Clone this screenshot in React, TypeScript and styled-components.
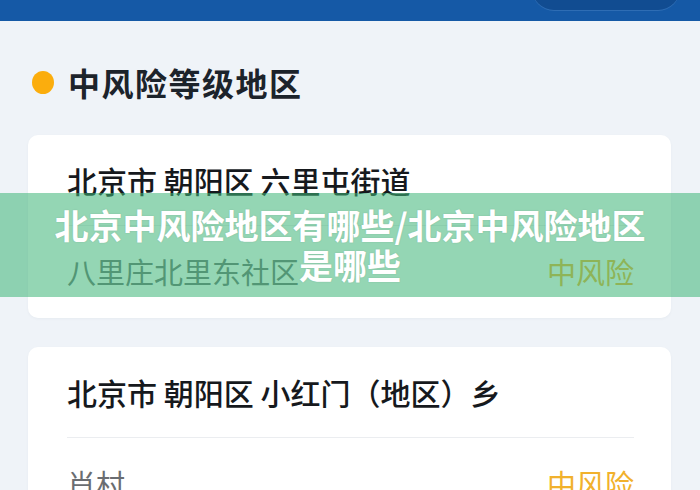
import React from "react";
import styled, { createGlobalStyle } from "styled-components";

const Global = createGlobalStyle`
  html, body { margin: 0; padding: 0; }
  body {
    width: 700px;
    height: 490px;
    overflow: hidden;
    background: #eff3f8;
    font-family: "Noto Sans CJK SC", "Noto Sans", sans-serif;
  }
`;

const Page = styled.div`
  position: relative;
  width: 700px;
  height: 490px;
  overflow: hidden;
  background: #eff3f8;
`;

const TopBar = styled.div`
  height: 21px;
  background: #1559a6;
  display: flex;
  justify-content: flex-end;
  align-items: flex-end;
  padding: 0 20px 11px 0;
  box-sizing: border-box;
  overflow: hidden;
`;

const Pill = styled.div`
  width: 148px;
  height: 40px;
  flex: none;
  border-radius: 0 0 22px 22px;
  background: #114c91;
  box-shadow: 0 1px 0 #2e6db4;
`;

const Section = styled.div`
  display: flex;
  flex-direction: column;
  padding: 0 29px 0 28px;
`;

const Heading = styled.div`
  display: flex;
  align-items: center;
  gap: 14px;
  height: 40px;
  margin: 41px 0 0 4px;
`;

const Dot = styled.span`
  width: 22px;
  height: 23px;
  border-radius: 50%;
  background: #fbad0d;
  flex: none;
`;

const HeadingText = styled.span`
  font-size: 32px;
  font-weight: 700;
  color: #1c232b;
  line-height: 40px;
  letter-spacing: 1.5px;
`;

const CardList = styled.div`
  display: flex;
  flex-direction: column;
  gap: 29px;
  margin-top: 33px;
`;

const Card = styled.div`
  background: #ffffff;
  border-radius: 10px;
  padding: 0 37px 0 39px;
  box-shadow: 0 1px 3px rgba(20, 40, 80, 0.04);
`;

const CardTitle = styled.div`
  padding: 30px 0;
  font-size: 30px;
  line-height: 30px;
  font-weight: 500;
  color: #16191d;
  border-bottom: 1px solid #ebedf0;
  white-space: nowrap;
`;

const Row = styled.div`
  display: flex;
  justify-content: space-between;
  align-items: center;
  padding: 30px 0 32px;
  font-size: 29px;
  line-height: 30px;
`;

const Place = styled.span`
  color: #6a6d71;
`;

const Level = styled.span`
  color: #f1b12d;
`;

const Banner = styled.div`
  position: absolute;
  left: 0;
  right: 0;
  top: 193px;
  height: 104px;
  background: rgba(64, 182, 122, 0.56);
  display: flex;
  align-items: center;
  justify-content: center;
  padding: 0 46px;
  box-sizing: border-box;
`;

const BannerText = styled.div`
  color: #ffffff;
  font-size: 34px;
  font-weight: 700;
  line-height: 40px;
  text-align: center;
  text-shadow: 0 0 2px rgba(0, 0, 0, 0.12);
`;

const areas = [
  { title: "北京市 朝阳区 六里屯街道", place: "八里庄北里东社区", level: "中风险" },
  { title: "北京市 朝阳区 小红门（地区）乡", place: "肖村", level: "中风险" },
];

export default function App() {
  return (
    <Page>
      <Global />
      <TopBar>
        <Pill />
      </TopBar>
      <Section>
        <Heading>
          <Dot />
          <HeadingText>中风险等级地区</HeadingText>
        </Heading>
        <CardList>
          {areas.map((a) => (
            <Card key={a.title}>
              <CardTitle>{a.title}</CardTitle>
              <Row>
                <Place>{a.place}</Place>
                <Level>{a.level}</Level>
              </Row>
            </Card>
          ))}
        </CardList>
      </Section>
      <Banner>
        <BannerText>北京中风险地区有哪些/北京中风险地区是哪些</BannerText>
      </Banner>
    </Page>
  );
}
